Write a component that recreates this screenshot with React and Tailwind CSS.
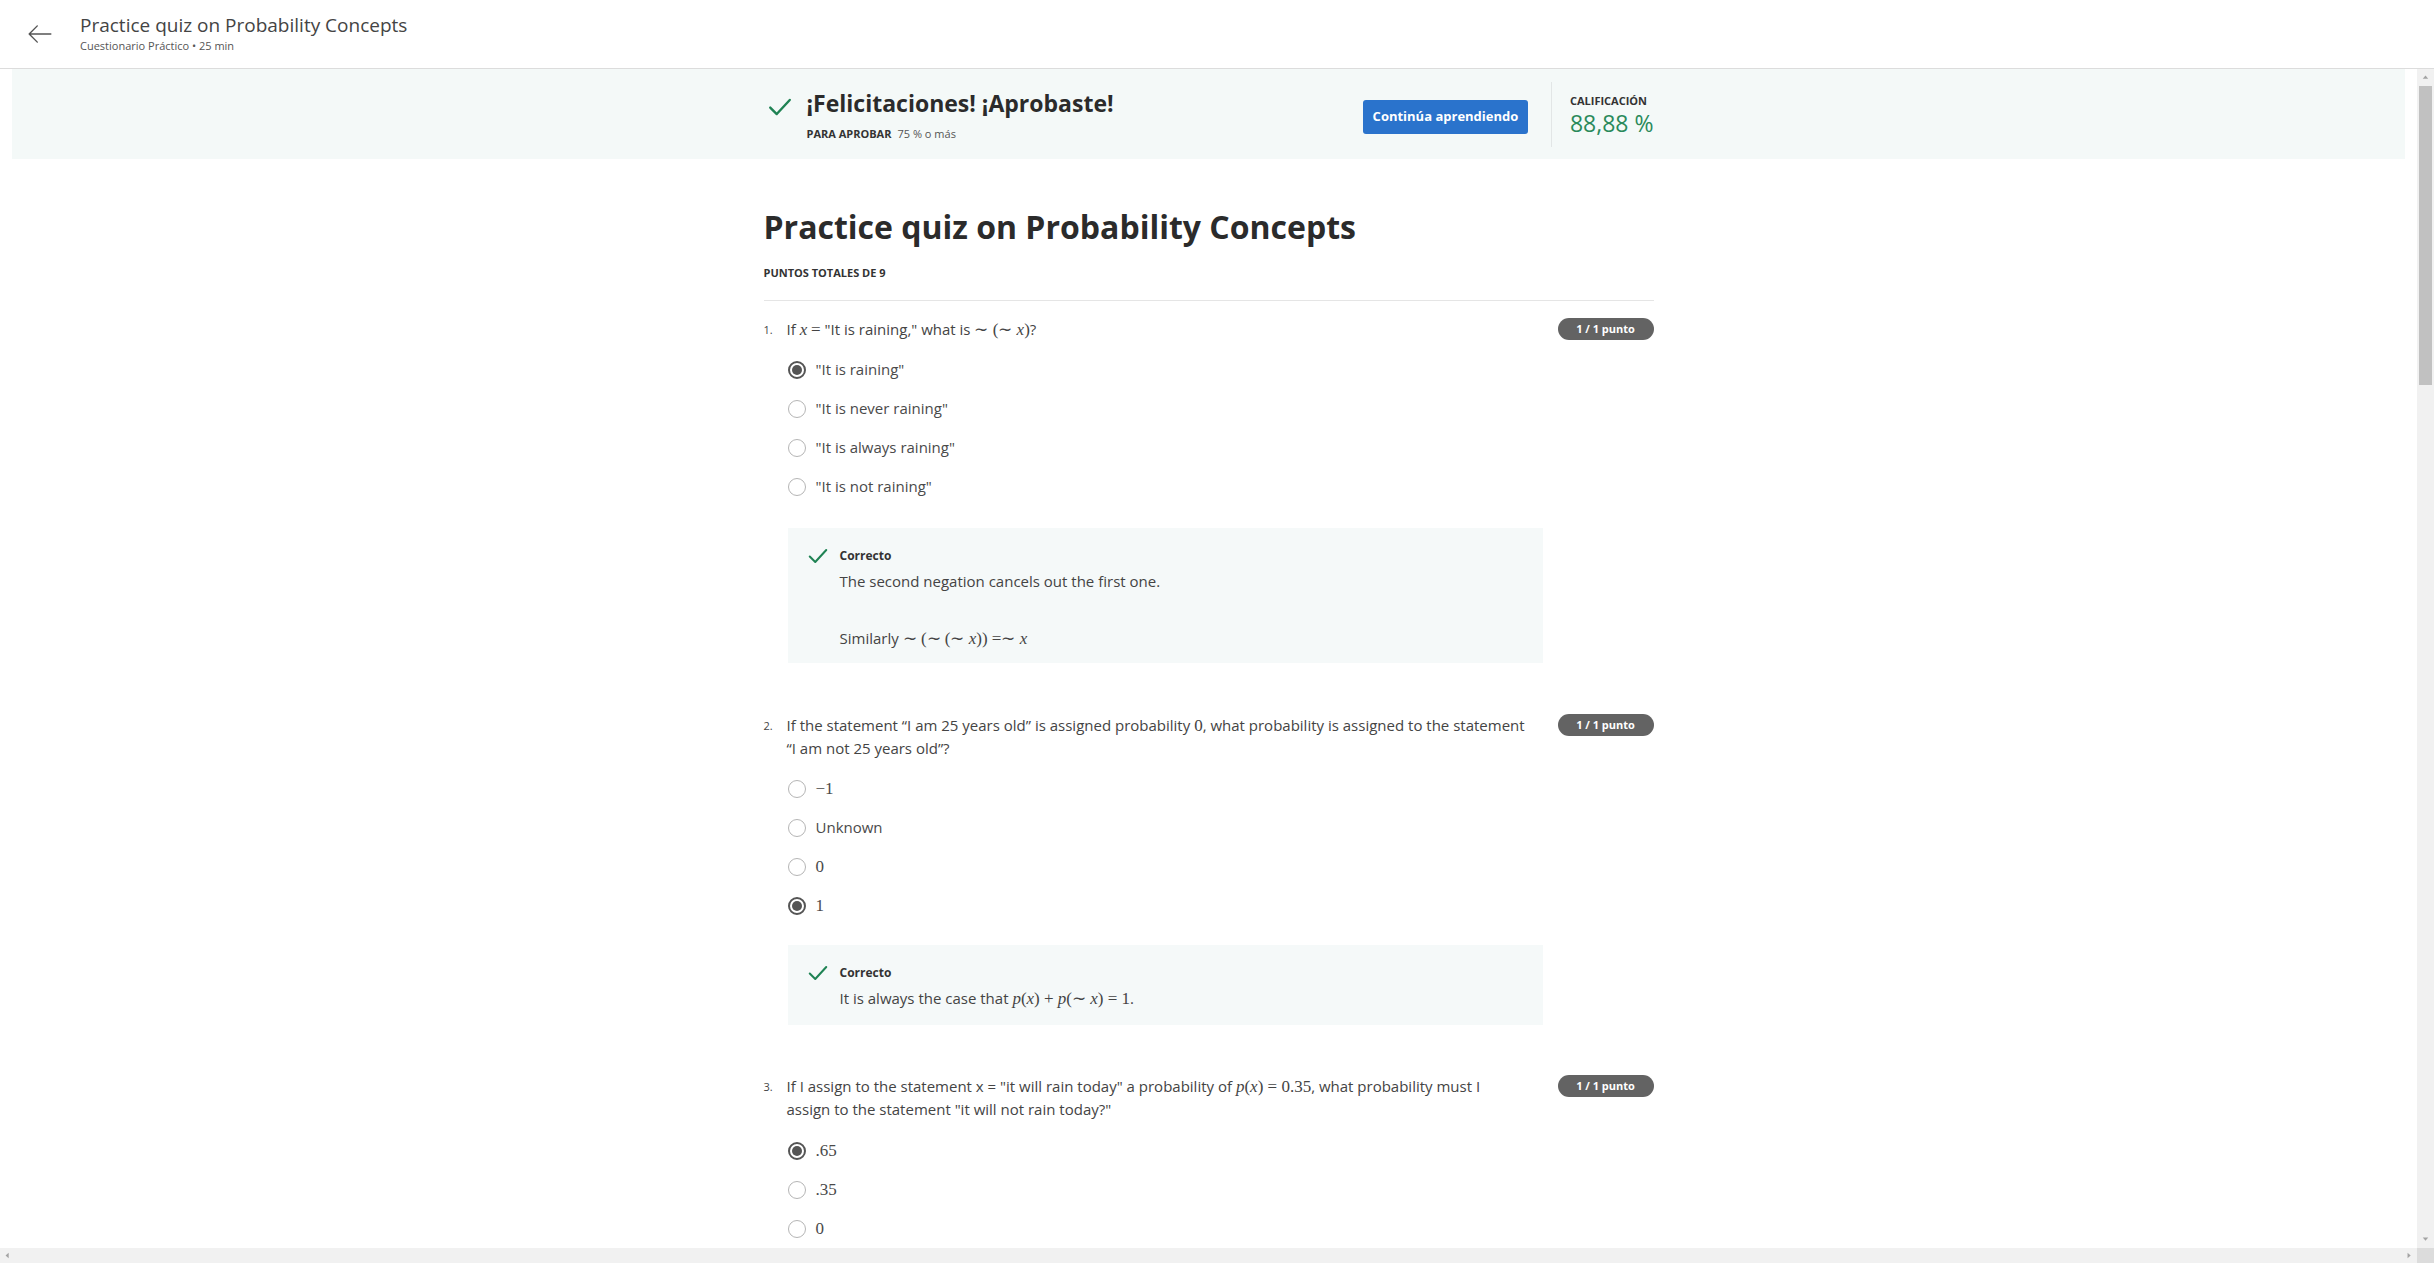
import React from "react";

const sans = "font-['Open_Sans',sans-serif]";
const serif = "font-['Liberation_Serif',serif]";

function V({ children }) {
  return <span className={`${serif} italic text-[17px] leading-none`}>{children}</span>;
}

function R({ children }) {
  return <span className={`${serif} text-[17px] leading-none`}>{children}</span>;
}

function Check({ className }) {
  return (
    <svg viewBox="0 0 24 24" className={className} fill="none" stroke="#1f8354" strokeWidth="2.2" strokeLinecap="round" strokeLinejoin="round">
      <path d="M3 12.5l6 6L21 5.5" />
    </svg>
  );
}

function Tri({ dir }) {
  const d = {
    up: "M1 6L4.5 2 8 6z",
    down: "M1 2L4.5 6 8 2z",
    left: "M6 1L2 4.5 6 8z",
    right: "M2 1L6 4.5 2 8z",
  }[dir];
  return (
    <svg viewBox="0 0 9 9" className="w-[7px] h-[7px]" fill="#a3a3a3">
      <path d={d} />
    </svg>
  );
}

function Radio({ checked }) {
  if (checked) {
    return (
      <span className="w-[18px] h-[18px] rounded-full border-2 border-[#555] flex items-center justify-center shrink-0">
        <span className="w-[10px] h-[10px] rounded-full bg-[#555]" />
      </span>
    );
  }
  return <span className="w-[18px] h-[18px] rounded-full border-[1.5px] border-[#b5b5b5] shrink-0" />;
}

function Option({ checked, children }) {
  return (
    <div className="h-[39px] flex items-center gap-[10px] pl-[24px] text-[15px] text-[#4a4a4a]">
      <Radio checked={checked} />
      <span>{children}</span>
    </div>
  );
}

function Badge() {
  return (
    <span className="w-[96px] h-[22px] rounded-full bg-[#636363] text-white text-[11px] font-bold flex items-center justify-center shrink-0">
      1 / 1 punto
    </span>
  );
}

function Question({ num, children }) {
  return (
    <div className="flex justify-between items-start">
      <div className="flex text-[15px] leading-[23px] text-[#444]">
        <span className="w-[23px] text-[11px] shrink-0">{num}.</span>
        <div className="w-[765px]">{children}</div>
      </div>
      <Badge />
    </div>
  );
}

function Feedback({ children, pb }) {
  return (
    <div className={`ml-[24px] w-[755px] bg-[#f5f9f9] pt-[17px] pl-[19px] pr-6 ${pb}`}>
      <div className="flex items-center gap-[11px]">
        <Check className="w-[22px] h-[22px]" />
        <span className="text-[12px] font-bold text-[#333] leading-[18px]">Correcto</span>
      </div>
      <div className="pl-[33px] mt-[3px] text-[15px] leading-[22px] text-[#444]">{children}</div>
    </div>
  );
}

export default function App() {
  return (
    <div className={`${sans} h-screen flex flex-col overflow-hidden bg-white text-[#333]`}>
      <header className="h-[69px] shrink-0 border-b border-[#dcdcdc] flex items-start pt-[12px]">
        <svg viewBox="0 0 24 24" className="w-[26px] h-[26px] ml-[27px] mt-[9px]" fill="none" stroke="#555" strokeWidth="1.3" strokeLinecap="round" strokeLinejoin="round">
          <path d="M22 12H2M9.5 4.5L2 12l7.5 7.5" />
        </svg>
        <div className="ml-[27px]">
          <div className="text-[19px] leading-[26px] text-[#444]">Practice quiz on Probability Concepts</div>
          <div className="text-[11px] leading-[14px] text-[#555] mt-[1px]">Cuestionario Práctico • 25 min</div>
        </div>
      </header>

      <div className="flex-1 min-h-0 flex flex-col">
        <div className="flex-1 min-h-0 flex">
          <main className="flex-1 min-w-0 overflow-hidden">
            <div className="mx-3 h-[90px] bg-[#f4f9f8]">
              <div className="max-w-[890px] mx-auto flex justify-between items-start">
                <div className="flex items-start pt-[19px]">
                  <Check className="w-[26px] h-[26px] mt-[6px] ml-[3px]" />
                  <div className="ml-[14px]">
                    <div className="text-[23px] leading-[30px] font-bold text-[#2b2b2b]">¡Felicitaciones! ¡Aprobaste!</div>
                    <div className="text-[11px] leading-[16px] mt-[8px] text-[#333]">
                      <span className="font-bold">PARA APROBAR</span>
                      <span className="ml-[6px] text-[#555]">75 % o más</span>
                    </div>
                  </div>
                </div>
                <div className="flex items-start mt-[13px]">
                  <button className="mt-[18px] w-[165px] h-[34px] rounded-[3px] bg-[#2a73cc] text-white text-[13px] font-bold">
                    Continúa aprendiendo
                  </button>
                  <div className="ml-[23px] w-px h-[65px] bg-[#e2e6e6]" />
                  <div className="ml-[18px] mt-[12px]">
                    <div className="text-[11px] leading-[14px] font-bold text-[#333]">CALIFICACIÓN</div>
                    <div className="text-[23px] leading-[28px] mt-[1px] text-[#2a8a5b]">88,88 %</div>
                  </div>
                </div>
              </div>
            </div>

            <div className="max-w-[890px] mx-auto">
              <h1 className="mt-[48px] text-[32px] leading-[40px] font-bold text-[#2b2b2b]">Practice quiz on Probability Concepts</h1>
              <div className="mt-[18px] text-[11px] leading-[16px] font-bold text-[#333]">PUNTOS TOTALES DE 9</div>
              <div className="mt-[19px] border-t border-[#e5e5e5] pt-[17px]">
                <Question num={1}>
                  If <V>x</V> <R>=</R> "It is raining," what is <R>∼ (∼ </R><V>x</V><R>)</R>?
                </Question>
                <div className="mt-[9px]">
                  <Option checked>"It is raining"</Option>
                  <Option>"It is never raining"</Option>
                  <Option>"It is always raining"</Option>
                  <Option>"It is not raining"</Option>
                </div>
                <div className="mt-[22px]">
                  <Feedback pb="pb-[14px]">
                    <p>The second negation cancels out the first one.</p>
                    <p className="mt-[35px]">
                      Similarly <R>∼ (∼ (∼ </R><V>x</V><R>)) =∼ </R><V>x</V>
                    </p>
                  </Feedback>
                </div>

                <div className="mt-[51px]">
                  <Question num={2}>
                    If the statement “I am 25 years old” is assigned probability <R>0</R>, what probability is assigned to the statement
                    <br />
                    “I am not 25 years old”?
                  </Question>
                </div>
                <div className="mt-[9px]">
                  <Option><R>−1</R></Option>
                  <Option>Unknown</Option>
                  <Option><R>0</R></Option>
                  <Option checked><R>1</R></Option>
                </div>
                <div className="mt-[20px]">
                  <Feedback pb="pb-[16px]">
                    <p>
                      It is always the case that <V>p</V><R>(</R><V>x</V><R>) + </R><V>p</V><R>(∼ </R><V>x</V><R>) = 1</R>.
                    </p>
                  </Feedback>
                </div>

                <div className="mt-[50px]">
                  <Question num={3}>
                    If I assign to the statement x = "it will rain today" a probability of <V>p</V><R>(</R><V>x</V><R>) = 0.35</R>, what probability must I
                    <br />
                    assign to the statement "it will not rain today?"
                  </Question>
                </div>
                <div className="mt-[10px]">
                  <Option checked><R>.65</R></Option>
                  <Option><R>.35</R></Option>
                  <Option><R>0</R></Option>
                </div>
              </div>
            </div>
          </main>

          <div className="w-[17px] shrink-0 bg-[#f1f1f1] flex flex-col items-center">
            <div className="h-[17px] flex items-center justify-center">
              <Tri dir="up" />
            </div>
            <div className="w-[13px] h-[299px] bg-[#c1c1c1]" />
            <div className="flex-1" />
            <div className="h-[17px] flex items-center justify-center">
              <Tri dir="down" />
            </div>
          </div>
        </div>

        <div className="h-[15px] shrink-0 flex">
          <div className="flex-1 bg-[#f1f1f1] flex items-center justify-between px-[4px]">
            <Tri dir="left" />
            <Tri dir="right" />
          </div>
          <div className="w-[17px] bg-[#dcdcdc]" />
        </div>
      </div>
    </div>
  );
}
